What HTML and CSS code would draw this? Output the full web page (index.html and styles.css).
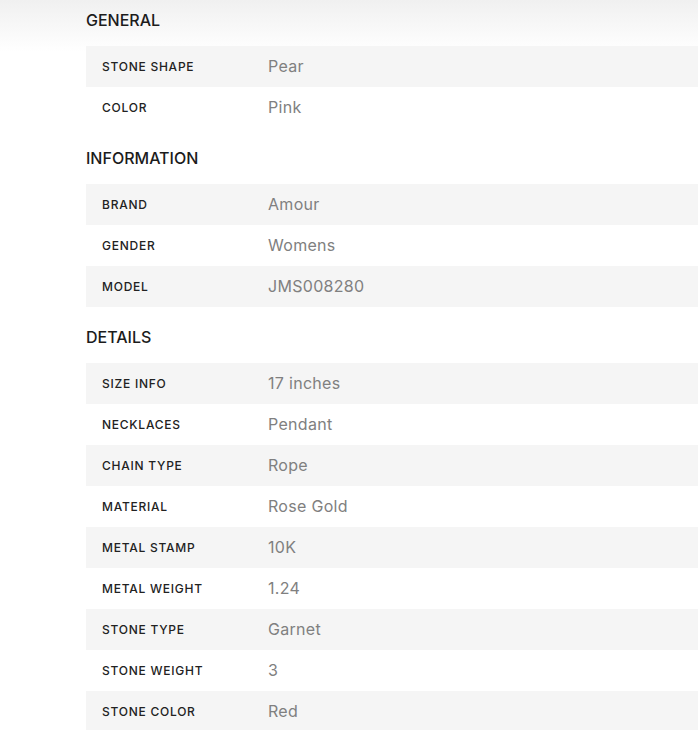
FILE: index.html
```html
<!DOCTYPE html>
<html lang="en">
<head>
<meta charset="utf-8">
<title>Specifications</title>
<link rel="stylesheet" href="styles.css">
</head>
<body>
<div class="fade"></div>
<div class="specs">
  <section class="group">
    <h3 class="group-title">GENERAL</h3>
    <div class="rows">
      <div class="row"><span class="label">Stone Shape</span><span class="value">Pear</span></div>
      <div class="row"><span class="label">Color</span><span class="value">Pink</span></div>
    </div>
  </section>
  <section class="group">
    <h3 class="group-title">INFORMATION</h3>
    <div class="rows">
      <div class="row"><span class="label">Brand</span><span class="value">Amour</span></div>
      <div class="row"><span class="label">Gender</span><span class="value">Womens</span></div>
      <div class="row"><span class="label">Model</span><span class="value">JMS008280</span></div>
    </div>
  </section>
  <section class="group">
    <h3 class="group-title">DETAILS</h3>
    <div class="rows">
      <div class="row"><span class="label">Size Info</span><span class="value">17 inches</span></div>
      <div class="row"><span class="label">Necklaces</span><span class="value">Pendant</span></div>
      <div class="row"><span class="label">Chain Type</span><span class="value">Rope</span></div>
      <div class="row"><span class="label">Material</span><span class="value">Rose Gold</span></div>
      <div class="row"><span class="label">Metal Stamp</span><span class="value">10K</span></div>
      <div class="row"><span class="label">Metal Weight</span><span class="value">1.24</span></div>
      <div class="row"><span class="label">Stone Type</span><span class="value">Garnet</span></div>
      <div class="row"><span class="label">Stone Weight</span><span class="value">3</span></div>
      <div class="row"><span class="label">Stone Color</span><span class="value">Red</span></div>
    </div>
  </section>
</div>
</body>
</html>
```
FILE: styles.css
```css
html, body {
  margin: 0;
  padding: 0;
  background: #ffffff;
  font-family: Inter, "Noto Sans", Arial, sans-serif;
  color: #222222;
}

.fade {
  position: absolute;
  left: 0;
  top: 0;
  width: 100%;
  height: 52px;
  background: linear-gradient(to bottom, #f0f0f0 0%, rgba(255,255,255,0) 100%);
  pointer-events: none;
}

.specs {
  position: relative;
  padding: 10px 0 0 86px;
}

.group + .group {
  margin-top: 20px;
}

.group-title {
  margin: 0 0 16px 0;
  font-size: 16px;
  line-height: 20px;
  font-weight: 500;
  color: #1c1c1c;
}

.rows {
  display: flex;
  flex-direction: column;
}

.row {
  display: grid;
  grid-template-columns: 166px 1fr;
  align-items: center;
  height: 41px;
  padding-left: 16px;
}

.row:nth-child(odd) {
  background: #f5f5f5;
}

.label {
  font-size: 12px;
  font-weight: 500;
  text-transform: uppercase;
  letter-spacing: 0.75px;
  color: #222222;
}

.value {
  font-size: 16px;
  font-weight: 400;
  letter-spacing: 0.3px;
  color: #808080;
  margin-bottom: 2px;
}
```
